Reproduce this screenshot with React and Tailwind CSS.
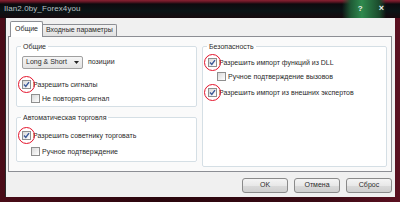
import React from 'react';

const font = { fontFamily: '"Liberation Sans", Arial, sans-serif' };

function Check({ checked, circled }) {
  return (
    <span className="relative inline-flex w-[9px] h-[9px] shrink-0">
      <span className="w-[9px] h-[9px] border border-[#8f8f8f] bg-[linear-gradient(135deg,#d9d9d9,#ffffff)] flex items-center justify-center">
        {checked && (
          <svg width="7" height="7" viewBox="0 0 7 7">
            <path d="M1 3.6 L2.8 5.4 L6 1.2" fill="none" stroke="#3b5998" strokeWidth="1.4" />
          </svg>
        )}
      </span>
      {circled && (
        <span className="absolute -left-[4px] -top-[4px] w-[17px] h-[17px] rounded-full border-[1.5px] border-[#e4132b]" />
      )}
    </span>
  );
}

function Row({ label, checked, circled, indent, className = '' }) {
  return (
    <div className={`flex items-center h-[10px] gap-[2px] ${indent ? 'pl-[13px]' : 'pl-[4px]'} ${className}`}>
      <Check checked={checked} circled={circled} />
      <span className="text-[7px] leading-none text-[#2a2a2a]">{label}</span>
    </div>
  );
}

function Group({ title, className = '', children }) {
  return (
    <fieldset className={`border border-[#d5dfe5] rounded-[2px] px-[1px] bg-white ${className}`}>
      <legend className="ml-[3px] px-[2px] text-[7px] leading-[9px] text-[#2a2a2a]">{title}</legend>
      {children}
    </fieldset>
  );
}

function Btn({ children }) {
  return (
    <div className="w-[46px] h-[15px] border border-[#8a8a8a] rounded-[3px] bg-[linear-gradient(#f4f4f4,#e8e8e8_50%,#dadada_51%,#cfcfcf)] flex items-center justify-center text-[7px] text-[#2a2a2a]">
      {children}
    </div>
  );
}

export default function App() {
  return (
    <div
      className="w-[400px] h-[202px] flex flex-col overflow-hidden bg-[linear-gradient(90deg,#4a0c18,#2a060d_40%,#3a0a14_80%,#5a1020)]"
      style={font}
    >
      {/* title bar */}
      <div className="h-[18px] shrink-0 flex items-center pl-[4px] pr-[14px] bg-[linear-gradient(180deg,#8a2233_0,#5a1422_2px,#0c0a0e_4px,#0a1416_60%,#160a0e)]">
        <span className="text-[8px] text-[#b9c0c4] tracking-[0.1px]">Ilan2.0by_Forex4you</span>
        <div className="flex-1" />
        <div className="flex items-center gap-[16px] h-full pl-[16px] pr-[2px] bg-[linear-gradient(90deg,transparent,#1f5a36_20%,#2f8a4e_45%,#1b4a2c_85%,transparent)]">
          <span className="text-[8px] font-bold text-[#eef2ee]">?</span>
          <span className="text-[9px] font-bold text-[#eef2ee]">×</span>
        </div>
      </div>

      {/* client */}
      <div className="flex-1 mx-[5px] mb-[5px] bg-[#f0f0f0] border-l border-[#2a2a2a] flex flex-col">
        {/* tabs */}
        <div className="flex items-end h-[18px] pl-[4px] pt-[3px]">
          <div className="h-[16px] px-[4px] bg-white border border-b-0 border-[#8c8e94] rounded-t-[2px] flex items-center text-[7px] text-[#2a2a2a] relative z-10 -mb-[1px]">
            Общие
          </div>
          <div className="h-[12px] px-[3px] bg-[linear-gradient(#f2f2f2,#e1e1e1)] border border-l-0 border-b-0 border-[#8c8e94] rounded-tr-[2px] flex items-center text-[7px] text-[#2a2a2a]">
            Входные параметры
          </div>
        </div>

        {/* panel */}
        <div className="h-[136px] ml-[2px] mr-[3px] border border-[#8c8e94] bg-[#fafafa] flex gap-[5px] pl-[7px] pr-[2px] pt-[5px]">
          <div className="w-[181px] flex flex-col">
            <Group title="Общие" className="h-[65px]">
              <div className="flex items-center gap-[5px] pl-[4px] pt-[5px]">
                <div className="w-[61px] h-[13px] border border-[#a0a0a0] rounded-[2px] bg-[linear-gradient(#f6f6f6,#e2e2e2)] flex items-center justify-between pl-[3px] pr-[3px]">
                  <span className="text-[7px] text-[#2a2a2a]">Long &amp; Short</span>
                  <svg width="5" height="3" viewBox="0 0 5 3">
                    <path d="M0 0 H5 L2.5 3 Z" fill="#222" />
                  </svg>
                </div>
                <span className="text-[7px] text-[#2a2a2a]">позиции</span>
              </div>
              <Row label="Разрешить сигналы" checked circled className="mt-[10px]" />
              <Row label="Не повторять сигнал" indent className="mt-[4px]" />
            </Group>
            <Group title="Автоматическая торговля" className="h-[49px] mt-[6px]">
              <Row label="Разрешить советнику торговать" checked circled className="mt-[8px]" />
              <Row label="Ручное подтверждение" indent className="mt-[6px]" />
            </Group>
          </div>
          <Group title="Безопасность" className="w-[185px] h-[125px]">
            <Row label="Разрешить импорт функций из DLL" checked circled className="mt-[6px]" />
            <Row label="Ручное подтверждение вызовов" indent className="mt-[4px]" />
            <Row label="Разрешить импорт из внешних экспертов" checked circled className="mt-[6px]" />
          </Group>
        </div>

        {/* buttons */}
        <div className="flex justify-end gap-[6px] pr-[3px] pt-[6px]">
          <Btn>OK</Btn>
          <Btn>Отмена</Btn>
          <Btn>Сброс</Btn>
        </div>
      </div>
    </div>
  );
}
